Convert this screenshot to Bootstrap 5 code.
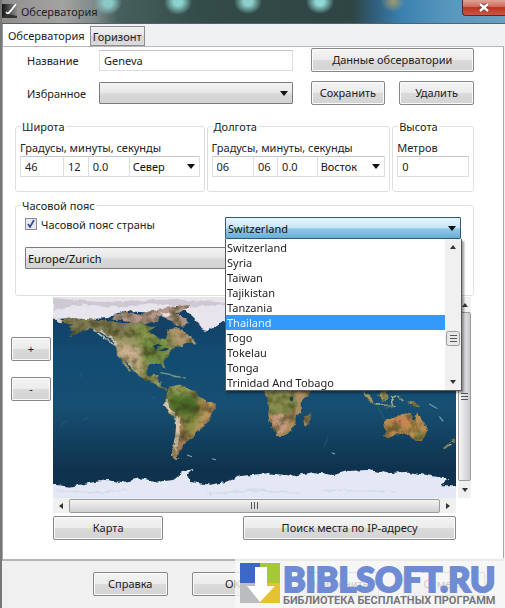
<!DOCTYPE html>
<html lang="ru">
<head>
<meta charset="utf-8">
<meta name="viewport" content="width=device-width, initial-scale=1">
<title>Обсерватория</title>
<link href="https://cdn.jsdelivr.net/npm/bootstrap@5.3.0/dist/css/bootstrap.min.css" rel="stylesheet">
<style>
body{font-family:"Noto Sans","Open Sans",sans-serif;font-size:11px;line-height:15px;color:#222;background:#f0f0f0}
.win{min-height:100vh;border-left:2px solid #77777a}
.titlebar{height:24px;background:
 radial-gradient(ellipse 14px 12px at 106px 3px,#8cc9c6 30%,transparent),
 radial-gradient(ellipse 14px 13px at 176px 2px,#8dd3cf 30%,transparent),
 radial-gradient(ellipse 14px 12px at 246px 2px,#8dcfcb 30%,transparent),
 radial-gradient(ellipse 14px 12px at 318px 2px,#8ed8d6 30%,transparent),
 radial-gradient(ellipse 12px 10px at 391px 2px,#a09a72,transparent),
 linear-gradient(90deg,#908f8e 0,#a3a3a2 60px,#7d8988 94px,#47605e 115px,#334b49 200px,#2e4543 350px,#326181 375px,#3a81b0 400px,#5595bc 440px,#6aa0bf 100%);
 border-bottom:1px solid #54636b}
.close-btn{width:43px;height:16px;border:1px solid #5b2a28;border-top:0;border-right:0;border-radius:0 0 0 4px;background:linear-gradient(#e0a297,#cf6a58 45%,#b93623 50%,#cf5540);display:flex;align-items:center;justify-content:center;padding:0}
.tabs{height:22px;background:#f0f1f3;border-left:1px solid #9a9a9a}
.tab-b{border:0;background:#fff;padding:0 5px;height:22px;color:#222}
.tab-b.off{height:20px;border:1px solid #8b8d90;background:linear-gradient(#f1f1f1,#e4e4e4 50%,#d6d6d6 52%,#dadada);padding:0 2px}
.tab-panel{background:#fff;border:1px solid #a4a6aa;border-top-color:#b6b8bc;border-bottom:2px solid #b4b4b6;padding:1px 29px 19px 12px;margin-right:1px}
.btn-g{border:1px solid #85878a;border-radius:2px;background:linear-gradient(#f4f4f4,#ebebeb 50%,#dadada 52%,#d3d3d3);box-shadow:inset 0 0 0 1px #fafafa;height:24px;padding:0 4px;color:#1c1c1c;line-height:20px;white-space:nowrap}
.top-grid{display:grid;grid-template-columns:84px 193fr 181fr;row-gap:9px;align-items:center}
.top-grid label{padding-left:12px}
.acts{padding-left:18px}
.pair{display:grid;grid-template-columns:1fr 1fr;gap:14px}
.inp{border:1px solid #dcdde2;border-top-color:#c4c6cc;background:#fff;height:21px;padding:0 4px;width:100%;min-width:0;color:#222;border-radius:0}
.sel{appearance:none;border:1px solid #7b7d80;border-radius:1px;height:22px;width:100%;padding:0 2px;color:#111;background:url("data:image/svg+xml,%3Csvg xmlns='http://www.w3.org/2000/svg' width='8' height='5'%3E%3Cpath d='M0 0h8L4 5z' fill='%23111'/%3E%3C/svg%3E") no-repeat right 4px center,linear-gradient(#f3f3f3,#e6e6e6 50%,#d8d8d8 54%,#d3d3d3)}
.sel.flat{background-image:url("data:image/svg+xml,%3Csvg xmlns='http://www.w3.org/2000/svg' width='8' height='5'%3E%3Cpath d='M0 0h8L4 5z' fill='%23111'/%3E%3C/svg%3E");border-color:#dcdde2;border-top-color:#c4c6cc;height:21px;padding:0 3px;min-width:0}
.sel.open{border-color:#335a78;background-image:url("data:image/svg+xml,%3Csvg xmlns='http://www.w3.org/2000/svg' width='8' height='5'%3E%3Cpath d='M0 0h8L4 5z' fill='%23111'/%3E%3C/svg%3E"),linear-gradient(#e6f5fc,#c7e6f6 48%,#92c9e8 54%,#68add6)}
.groups{display:grid;grid-template-columns:190fr 184fr 82fr;gap:2px;margin-top:14px}
.group-b{border:1px solid #dddfe3;border-radius:3px;padding:0 4px;margin:0;min-width:0}
.group-b legend{float:none;width:auto;font-size:11px;line-height:15px;margin:0 0 0 1px;padding:0 1px}
.groups .group-b{height:73px}
.cap{display:block;white-space:nowrap;margin:6px 0 1px}
.dms{display:grid;grid-template-columns:44fr 25fr 41fr 70fr}
.dms > * + *{border-left:0}
.tz{height:98px;margin-top:6px;padding:0 12px 0 9px}
.tz legend{margin-left:-4px}
.tz-grid{display:grid;grid-template-columns:200fr 236fr}
.chk{width:12px;height:12px;margin:0;appearance:none;border:1px solid #8a8d92;background:#e6e9ef url("data:image/svg+xml,%3Csvg xmlns='http://www.w3.org/2000/svg' viewBox='0 0 10 10'%3E%3Cpath d='M2 5l2 3 4-7' fill='none' stroke='%2337478c' stroke-width='1.7'/%3E%3C/svg%3E") center/10px}
.drop{position:absolute;top:100%;left:0;right:-1px;z-index:5;background:#fff;border:1px solid #55585c;border-top:0;box-shadow:2px 2px 2px #0006;display:flex}
.drop ul{flex:1;margin:0;padding:1px 0 0;list-style:none}
.drop li{padding:0 1px;height:15px;line-height:15px}
.drop li.on{background:#3399fb;color:#e8f4ff}
.vbar{width:16px;background:#f0f0f1;display:flex;flex-direction:column;align-items:center;justify-content:space-between;padding:6px 0}
.thumb{border:1px solid #9b9b9e;border-radius:2px;background:linear-gradient(90deg,#f5f5f5,#dcdcde 60%,#c9c9cc)}
.map-grid{display:grid;grid-template-columns:38px 1fr 15px;margin:1px 3px 0 0}
.zoomers{margin-left:-4px;padding-top:40px;width:40px}
.map{display:block;width:100%;height:201px}
.vs{background:#f0f0f0;margin-left:2px;display:flex;flex-direction:column;align-items:center;padding:6px 0}
.vs .thumb{flex:1;width:100%;margin:5px 0 7px;display:flex;align-items:center;justify-content:center}
.hs{grid-column:2;height:15px;background:#f0f0f0;display:flex;align-items:center;padding:0 6px}
.hs .thumb{flex:1;height:14px;margin:0 6px;background:linear-gradient(#f2f2f2,#dedede 60%,#d0d0d2);display:flex;align-items:center;justify-content:center}
.map-btns{grid-column:2;display:grid;grid-template-columns:110fr 212fr;gap:80px;margin-top:3px}
.foot{height:47px;padding:11px 20px 0 91px;position:relative;display:grid;grid-template-columns:75fr 83fr 81fr 83fr;column-gap:24px}
.wm{position:absolute;right:0;bottom:0;width:270px;height:50px;background:#f7f7f8cc;padding:5px 0 0 5px;display:flex;gap:3px}
.wm-name{font:900 34px/31px Lato,sans-serif;color:#6f8bd3;-webkit-text-stroke:2px #6f8bd3;display:block;white-space:nowrap}
.wm-sub{font:bold 11px/13px Roboto,sans-serif;color:#77777b;display:block;white-space:nowrap}
</style>
<script src="https://cdn.jsdelivr.net/npm/bootstrap@5.3.0/dist/js/bootstrap.bundle.min.js"></script>
</head>
<body>
<main class="win d-flex flex-column">
<header class="titlebar d-flex align-items-start">
  <svg class="mt-1" width="15" height="14" viewBox="0 0 15 14" aria-hidden="true"><defs><linearGradient id="ic" x2="1"><stop stop-color="#161616"/><stop offset="1" stop-color="#8c8c8c"/></linearGradient></defs><path fill="url(#ic)" d="M0 0h15v14H0z"/><path d="M14 0L8 8M9 6l-3 4-2-2" stroke="#fff" stroke-width="1.7" fill="none"/><path d="M0 13l6-3 9 2v2H0z" fill="#333"/></svg>
  <span class="ms-1 mt-1">Обсерватория</span>
  <button class="close-btn ms-auto" aria-label="Закрыть"><svg width="10" height="9" viewBox="0 0 10 9"><path d="M1 1l8 7M9 1L1 8" stroke="#70372f" stroke-width="4"/><path d="M1 1l8 7M9 1L1 8" stroke="#fff" stroke-width="2.4"/></svg></button>
</header>
<nav class="tabs d-flex align-items-end" role="tablist"><button class="tab-b" role="tab" aria-selected="true">Обсерватория</button><button class="tab-b off" role="tab" aria-selected="false">Горизонт</button></nav>
<section class="tab-panel">
  <div class="top-grid">
    <label for="nm">Название</label><input id="nm" class="inp" value="Geneva"><div class="acts"><button class="btn-g w-100">Данные обсерватории</button></div>
    <label for="fav">Избранное</label><select id="fav" class="sel"><option></option></select><div class="acts pair"><button class="btn-g">Сохранить</button><button class="btn-g">Удалить</button></div>
  </div>
  <div class="groups">
    <fieldset class="group-b"><legend>Широта</legend><span class="cap">Градусы, минуты, секунды</span>
      <div class="dms"><input class="inp" aria-label="Градусы широты" value="46"><input class="inp" aria-label="Минуты широты" value="12"><input class="inp" aria-label="Секунды широты" value="0.0"><select class="sel flat" aria-label="Полушарие"><option>Север</option></select></div></fieldset>
    <fieldset class="group-b"><legend>Долгота</legend><span class="cap">Градусы, минуты, секунды</span>
      <div class="dms"><input class="inp" aria-label="Градусы долготы" value="06"><input class="inp" aria-label="Минуты долготы" value="06"><input class="inp" aria-label="Секунды долготы" value="0.0"><select class="sel flat" aria-label="Полушарие"><option>Восток</option></select></div></fieldset>
    <fieldset class="group-b"><legend>Высота</legend><label class="cap" for="alt">Метров</label><input id="alt" class="inp" value="0"></fieldset>
  </div>
  <fieldset class="group-b tz"><legend>Часовой пояс</legend>
    <div class="tz-grid">
      <div class="d-flex align-items-center gap-1 pb-1"><input id="ctz" type="checkbox" class="chk" checked><label for="ctz">Часовой пояс страны</label></div>
      <div class="position-relative mt-1"><select class="sel open d-block" aria-label="Страна"><option>Switzerland</option></select>
        <div class="drop"><ul role="listbox" aria-label="Страны"><li role="option">Switzerland</li><li role="option">Syria</li><li role="option">Taiwan</li><li role="option">Tajikistan</li><li role="option">Tanzania</li><li role="option" class="on" aria-selected="true">Thailand</li><li role="option">Togo</li><li role="option">Tokelau</li><li role="option">Tonga</li><li role="option">Trinidad And Tobago</li></ul>
          <div class="vbar"><svg width="6" height="4"><path d="M0 4L3 0l3 4z" fill="#333"/></svg><svg class="mt-5" width="14" height="15"><rect x=".5" y=".5" width="13" height="14" rx="2" fill="#e7e7e8" stroke="#9b9b9e"/><path d="M4 4.500h7M4 7.500h7M4 10.500h7" stroke="#555"/></svg><svg width="6" height="4"><path d="M0 0h6L3 4z" fill="#333"/></svg></div></div>
      </div>
    </div>
    <select class="sel d-block mt-2" aria-label="Часовой пояс"><option>Europe/Zurich</option></select>
  </fieldset>
  <div class="map-grid">
    <div class="zoomers"><button class="btn-g w-100 d-block mb-3">+</button><button class="btn-g w-100 d-block">-</button></div>
    <svg class="map" viewBox="159 21 1206 603" preserveAspectRatio="none" role="img" aria-label="Карта мира">
      <defs>
        <linearGradient id="sea" x2="0" y2="1"><stop stop-color="#123a5f"/><stop offset=".3" stop-color="#134c72"/><stop offset=".55" stop-color="#164f72"/><stop offset=".85" stop-color="#0f334f"/></linearGradient>
        <filter id="rough" x="-5%" y="-5%" width="110%" height="110%" color-interpolation-filters="sRGB"><feTurbulence type="fractalNoise" baseFrequency=".06" numOctaves="3" seed="4" result="n"/><feDisplacementMap in="SourceGraphic" in2="n" scale="14" xChannelSelector="R" yChannelSelector="G" result="d"/><feTurbulence type="fractalNoise" baseFrequency=".035" numOctaves="4" seed="8"/><feColorMatrix values="0 0 0 0 .25  0 0 0 0 .25  0 0 0 0 .1  1.800 0 0 0 -.75"/><feComposite in2="d" operator="in" result="t"/><feMerge><feMergeNode in="d"/><feMergeNode in="t"/></feMerge></filter>
        <filter id="edge" color-interpolation-filters="sRGB"><feTurbulence type="fractalNoise" baseFrequency=".05" numOctaves="3" seed="2" result="n"/><feDisplacementMap in="SourceGraphic" in2="n" scale="14" xChannelSelector="R" yChannelSelector="G"/></filter>
        <filter id="soft" x="-30%" y="-30%" width="160%" height="160%"><feGaussianBlur stdDeviation="11"/></filter>
        <clipPath id="na"><path d="M185 88L215 85L260 88L300 90L335 95L370 100L430 100L450 108L470 112L450 120L448 130L470 138L480 148L492 150L500 138L505 118L530 115L550 125L560 135L578 145L580 157L560 158L545 168L525 170L510 180L503 195L492 210L489 218L495 237L488 236L482 222L460 222L442 228L437 245L442 258L455 262L462 252L475 255L470 268L480 278L482 290L505 298L492 302L470 284L445 272L420 262L405 248L385 222L368 205L380 225L394 246L385 240L365 214L352 195L348 175L345 158L325 140L300 125L275 118L255 118L240 128L205 138L228 124L215 122L208 112L222 105L190 98Z"/></clipPath>
        <clipPath id="sa"><path d="M510 290L530 285L560 292L582 302L594 320L620 332L646 344L646 356L632 372L628 392L605 407L595 424L580 440L568 446L558 460L548 466L542 480L532 488L530 500L543 507L525 508L514 496L518 470L524 440L527 408L524 385L506 372L494 348L497 322Z"/></clipPath>
      </defs>
      <path fill="url(#sea)" d="M159 21h1206v603H159z"/>
      <path d="M200 390l-20 20M240 250l5 12M250 390l15-8M455 326l10-5M970 470l12-30M1130 350l30 50" stroke="#4c7d98" stroke-width="2" opacity=".5"/>
      <g filter="url(#edge)">
        <path d="M150 15H1380V75H700L690 90L655 100L636 112L620 124L604 118L595 100L582 84L562 66L550 62L500 72L390 64L345 70L325 84L260 88L210 84L160 88Z" fill="#e7e4eb"/>
        <path d="M159 24L300 36L520 28L680 38L680 46L550 50L450 40L350 52L250 42L160 60Z" fill="#c8c1cd" opacity=".8"/>
        <path d="M159 86L175 98L190 100L180 86Z" fill="#ddd6d4"/>
      </g>
      <g filter="url(#rough)">
        <path d="M345 70L380 66L430 72L455 60L530 48L575 45L545 62L525 72L560 86L565 100L545 112L525 106L520 92L490 82L470 78L475 92L435 100L395 98L360 90L335 90Z" fill="#b3978a"/>
        <path d="M480 68l35 5-25 7z" fill="#e8e2e4"/>
        <g clip-path="url(#na)"><path fill="#96935f" d="M159 60h450v250H159z"/><g filter="url(#soft)"><path d="M180 80h210l20 30-70 30-60-20-80 20z" fill="#807a53"/><path d="M390 110l60-10 50 40 10 40-80 15z" fill="#85964b"/><path d="M440 150l65 10-10 70-75-10z" fill="#6d8c3f"/><path d="M340 155l75 20 15 55-20 20-60-50z" fill="#cfb292"/><path d="M500 110h90v60h-60z" fill="#b3966f"/><path d="M410 220l35 15 30 30-30 10z" fill="#9b9f55"/></g></g>
        <path d="M300 123l38 26 12 20-35-24-35-25" fill="none" stroke="#ddd8d0" stroke-width="4"/>
        <g clip-path="url(#sa)"><path fill="#a88e55" d="M480 270h190v250H480z"/><g filter="url(#soft)"><path d="M500 300l85 10 20 60-55 15-50-35z" fill="#466a28"/><path d="M510 280l70 15-20 20-60-5z" fill="#92a456"/><path d="M610 330l50 10-30 70-45 20z" fill="#c0955f"/><path d="M550 385l55-15-25 60-30 20z" fill="#838e42"/><path d="M540 400l30 40-30 60-25-10z" fill="#a07458"/></g><path d="M496 325l4 25 28 34 4 40-10 70" fill="none" stroke="#d8c6ac" stroke-width="12"/></g>
      </g>
      <path d="M445 124l25-16 20 3 10 14-6 24-10-8-16-4zM457 168l16-7 14 8-14-1-6 16-4-9zM475 183l19-10 12 2-8 7z" fill="#153e60"/>
      <path d="M480 248l28 5 17 8M520 258l22 4M548 263l8 1" stroke="#7c9c84" stroke-width="4" fill="none"/>
      <path d="M575 150l10 13" stroke="#aaa07b" stroke-width="6"/>
      <g filter="url(#rough)">
        <path d="M735 295L930 295L920 318L900 338L902 368L886 382L884 402L868 425L852 437L828 439L820 420L807 395L803 370L808 345L798 320L790 300Z" fill="#ad8c61"/>
        <path d="M798 305h85l10 45-40 25-45-5z" fill="#868b4e"/><path d="M812 380l30-10 28 20-20 35-22 5z" fill="#c59a7c"/>
        <path d="M915 376L930 366L932 380L922 406L912 410L909 395Z" fill="#a28966"/>
        <path d="M1147 402L1158 390L1180 383L1190 375L1206 368L1234 373L1230 386L1242 392L1248 365L1256 385L1272 402L1282 420L1274 440L1260 453L1240 452L1228 438L1208 430L1182 434L1164 442L1150 438L1155 425Z" fill="#b98c50"/>
        <path d="M1175 385l60-8-5 25-55 5z" fill="#c98454"/><path d="M1235 424l42-5-17 31-20-2z" fill="#93894c"/>
        <path d="M1083 297L1100 312L1116 332L1118 342L1102 330ZM1132 315L1155 300L1162 318L1154 333L1140 330ZM1218 331L1238 334L1258 350L1246 351L1225 341Z" fill="#a39558"/>
        <path d="M1120 340l65 11M1170 325l15-8M1171 320l8 28M1190 318l20 18" stroke="#a9b88d" stroke-width="5" fill="none"/>
        <path d="M1354 445L1364 450L1358 459L1348 455ZM1325 475L1345 460L1351 464L1334 478Z" fill="#a49e72"/>
      </g>
      <path d="M870 318l9 5-4 12-8-5zM1250 463h9l-5 7z" fill="#203e48"/>
      <path d="M560 495l15 5M635 506l12 3M993 488l10 4M1285 342l24 14M1315 380l12 14" stroke="#8aa4a8" stroke-width="3"/>
      <g filter="url(#edge)">
        <path d="M150 582L210 590L270 578L320 570L370 577L420 565L475 575L520 569L548 546L580 536L560 555L570 576L630 584L675 576L720 558L800 550L880 557L940 546L1000 555L1040 543L1100 540L1160 550L1220 545L1280 556L1345 568L1320 586L1380 586V640H150Z" fill="#e4e8f5"/>
        <path d="M160 602l140 6 80-8M620 612l140-12 140 8M960 600l220 5" stroke="#cbd1e5" stroke-width="4" fill="none" opacity=".6"/>
      </g>
    </svg>
    <div class="vs"><svg width="6" height="4"><path d="M0 4L3 0l3 4z" fill="#333"/></svg><div class="thumb"><svg width="7" height="8"><path d="M0 .5h7M0 3.500h7M0 6.500h7" stroke="#555"/></svg></div><svg width="6" height="4"><path d="M0 0h6L3 4z" fill="#333"/></svg></div>
    <div class="hs"><svg width="4" height="6"><path d="M4 0v6L0 3z" fill="#333"/></svg><div class="thumb"><svg width="8" height="7"><path d="M.5 0v7M3.500 0v7M6.500 0v7" stroke="#555"/></svg></div><svg width="4" height="6"><path d="M0 0v6l4-3z" fill="#333"/></svg></div>
    <div class="map-btns"><button class="btn-g">Карта</button><button class="btn-g">Поиск места по IP-адресу</button></div>
  </div>
</section>
<footer class="foot flex-grow-1"><button class="btn-g">Справка</button><button class="btn-g">OK</button><button class="btn-g">Применить</button><button class="btn-g">Отмена</button>
  <div class="wm"><svg class="flex-shrink-0" width="40" height="40" viewBox="0 0 40 40" aria-hidden="true"><path fill="#3c69c7" d="M0 0h20v20H0z"/><path fill="#a4c934" d="M20 0h20v20H20z"/><path fill="#bbbcbe" d="M0 20h20v20H0z"/><path fill="#e5c231" d="M20 20h20v20H20z"/><path fill="#fff" d="M15 4h12v19h8L20 39 7 23h8z"/></svg><div><span class="wm-name">BIBLSOFT.RU</span><span class="wm-sub">БИБЛИОТЕКА БЕСПЛАТНЫХ ПРОГРАММ</span></div></div>
</footer>
</main>
</body>
</html>
